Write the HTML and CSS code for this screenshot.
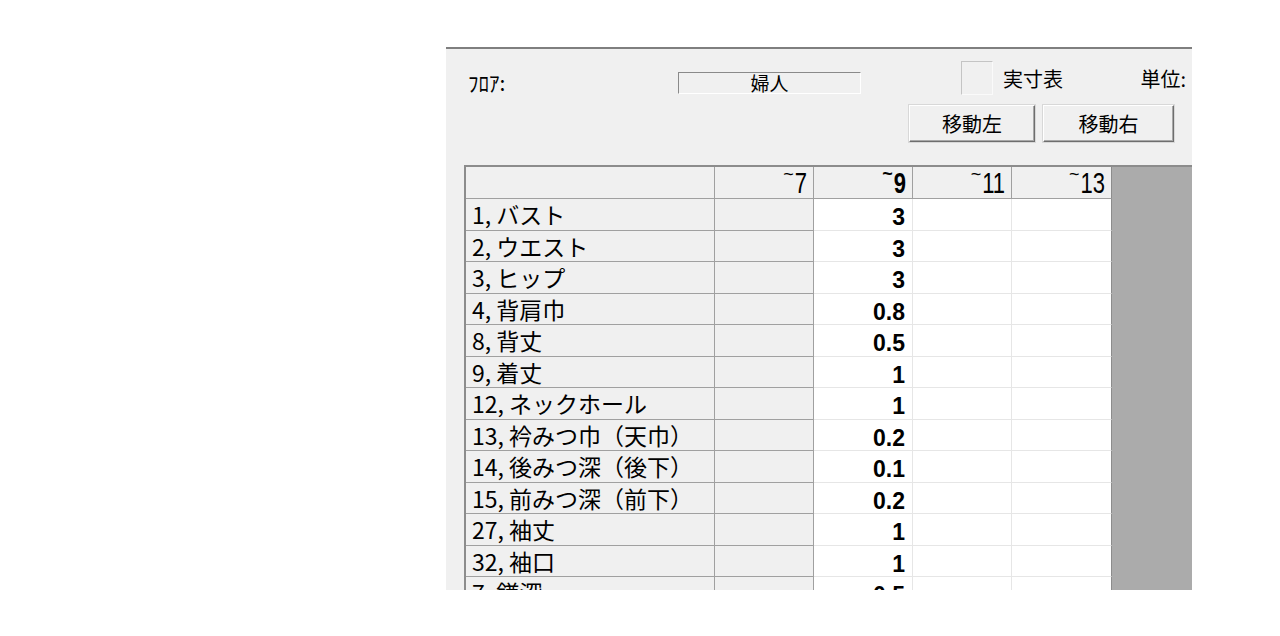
FILE: index.html
```html
<!DOCTYPE html>
<html lang="ja">
<head>
    <meta charset="UTF-8">
    <title>寸法表</title>
    <link rel="stylesheet" href="styles.css">
</head>
<body>

    <div class="window">
        <div class="form-row">
            <span class="lbl floor">ﾌﾛｱ:</span>
            <span class="textbox">婦人</span>
            <span class="check"></span>
            <span class="lbl actual">実寸表</span>
            <span class="lbl unit">単位:</span>
        </div>

        <div class="btn-row">
            <button class="btn">移動左</button>
            <button class="btn wide">移動右</button>
        </div>

        <div class="sheet">
            <div class="grid">
                <div class="cell fixed"></div>
                <div class="cell fixed hd"><span class="tl">~</span><span class="hn">7</span></div>
                <div class="cell fixed hd bold"><span class="tl">~</span><span class="hn">9</span></div>
                <div class="cell fixed hd"><span class="tl">~</span><span class="hn">11</span></div>
                <div class="cell fixed hd last"><span class="tl">~</span><span class="hn">13</span></div>

                <div class="cell fixed name">1, バスト</div><div class="cell fixed"></div><div class="cell val">3</div><div class="cell"></div><div class="cell last"></div>
                <div class="cell fixed name">2, ウエスト</div><div class="cell fixed"></div><div class="cell val">3</div><div class="cell"></div><div class="cell last"></div>
                <div class="cell fixed name">3, ヒップ</div><div class="cell fixed"></div><div class="cell val">3</div><div class="cell"></div><div class="cell last"></div>
                <div class="cell fixed name">4, 背肩巾</div><div class="cell fixed"></div><div class="cell val">0.8</div><div class="cell"></div><div class="cell last"></div>
                <div class="cell fixed name">8, 背丈</div><div class="cell fixed"></div><div class="cell val">0.5</div><div class="cell"></div><div class="cell last"></div>
                <div class="cell fixed name">9, 着丈</div><div class="cell fixed"></div><div class="cell val">1</div><div class="cell"></div><div class="cell last"></div>
                <div class="cell fixed name">12, ネックホール</div><div class="cell fixed"></div><div class="cell val">1</div><div class="cell"></div><div class="cell last"></div>
                <div class="cell fixed name">13, 衿みつ巾（天巾）</div><div class="cell fixed"></div><div class="cell val">0.2</div><div class="cell"></div><div class="cell last"></div>
                <div class="cell fixed name">14, 後みつ深（後下）</div><div class="cell fixed"></div><div class="cell val">0.1</div><div class="cell"></div><div class="cell last"></div>
                <div class="cell fixed name">15, 前みつ深（前下）</div><div class="cell fixed"></div><div class="cell val">0.2</div><div class="cell"></div><div class="cell last"></div>
                <div class="cell fixed name">27, 袖丈</div><div class="cell fixed"></div><div class="cell val">1</div><div class="cell"></div><div class="cell last"></div>
                <div class="cell fixed name">32, 袖口</div><div class="cell fixed"></div><div class="cell val">1</div><div class="cell"></div><div class="cell last"></div>
                <div class="cell fixed name">7, 鎌深</div><div class="cell fixed"></div><div class="cell val">0.5</div><div class="cell"></div><div class="cell last"></div>
            </div>
        </div>
    </div>

</body>
</html>
```

FILE: styles.css
```css
body { margin: 0; background: #fff; font-family: "Noto Sans CJK JP", sans-serif; color: #000; }

.window {
    display: flex;
    flex-direction: column;
    margin: 47px 0 0 446px;
    width: 746px;
    height: 543px;
    box-sizing: border-box;
    border-top: 2px solid #7f7f7f;
    background: #f0f0f0;
    overflow: hidden;
}

/* top form */
.form-row { display: flex; align-items: flex-start; height: 34px; margin-top: 12px; }
.lbl { font-size: 20px; line-height: 20px; white-space: nowrap; }
.floor { width: 210px; margin: 11px 0 0 22px; font-size: 21px; }
.textbox {
    width: 183px;
    height: 22px;
    margin-top: 11px;
    box-sizing: border-box;
    border: 1px solid;
    border-color: #8a8a8a #fff #fff #8a8a8a;
    font-size: 19px;
    line-height: 20px;
    text-align: center;
}
.check {
    width: 32px;
    height: 34px;
    margin-left: 100px;
    box-sizing: border-box;
    border: 1px solid;
    border-color: #c4c4c4 #fafafa #fafafa #c4c4c4;
}
.actual { margin: 8px 0 0 10px; }
.unit { margin: 8px 6px 0 auto; }

.btn-row { display: flex; justify-content: flex-end; gap: 8px; padding-right: 18px; margin-top: 10px; }
.btn {
    width: 126px;
    height: 37px;
    padding: 0;
    font-family: "Noto Sans CJK JP", sans-serif;
    font-size: 20px;
    background: #f0f0f0;
    border: 1px solid;
    border-color: #fff #6e6e6e #6e6e6e #fff;
    box-shadow: inset -1px -1px #a8a8a8, 0 0 0 1px #d8d8d8;
}
.btn.wide { width: 131px; }

/* grid */
.sheet {
    flex: 1;
    margin: 23px 0 0 18px;
    border-top: 2px solid #8c8c8c;
    border-left: 2px solid #8c8c8c;
    background: #ababab;
    overflow: hidden;
}
.grid {
    display: grid;
    grid-template-columns: 249px 99px 99px 99px 100px;
    grid-template-rows: 32px;
    grid-auto-rows: 31.5px;
    width: 646px;
}
.cell {
    box-sizing: border-box;
    background: #fff;
    border-right: 1px solid #e6e6e6;
    border-bottom: 1px solid #e6e6e6;
    white-space: nowrap;
}
.cell.fixed { background: #f0f0f0; border-color: #a0a0a0; }
.cell.last { border-right-color: #8c8c8c; }

.name { font-size: 23px; line-height: 30px; padding-left: 6px; }
.val {
    font-family: "Liberation Sans", sans-serif;
    font-weight: bold;
    font-size: 23px;
    line-height: 23px;
    padding: 7px 7px 0 0;
    text-align: right;
}

.hd {
    display: flex;
    justify-content: flex-end;
    align-items: center;
    padding: 2px 6px 0 0;
    font-family: "Liberation Sans", sans-serif;
}
.hd .tl { align-self: flex-start; font-size: 18px; line-height: 10px; margin-right: 1px; }
.hd .hn { display: inline-block; font-size: 22px; line-height: 22px; transform: scaleY(1.3); }
.hd.bold { font-weight: bold; }
```
